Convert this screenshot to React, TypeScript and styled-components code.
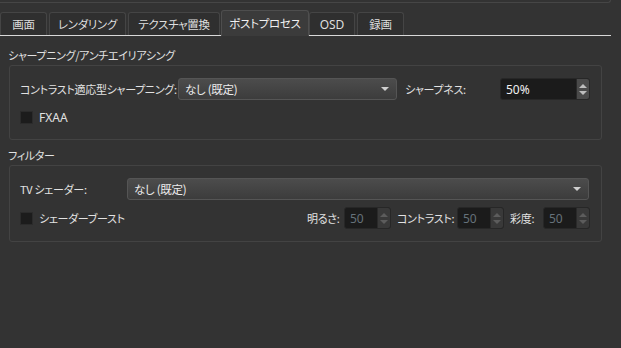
import React from "react";
import styled, { createGlobalStyle } from "styled-components";

const Global = createGlobalStyle`
  html, body { margin: 0; padding: 0; background: #333333; }
  body {
    font-family: "Noto Sans CJK JP", "Noto Sans", sans-serif;
    font-size: 11px;
    letter-spacing: -0.3px;
    color: #e2e2e2;
    font-feature-settings: "palt";
  }
`;

const Page = styled.div`
  width: 621px;
  height: 348px;
  background: #333333;
  display: flex;
  flex-direction: column;
  overflow: hidden;
`;

const TopEdge = styled.div`
  width: 610px;
  height: 2px;
  border-bottom: 1px solid #464646;
  border-right: 1px solid #464646;
  border-bottom-right-radius: 3px;
`;

const TabBar = styled.div`
  margin-top: 7px;
  width: 611px;
  height: 25px;
  display: flex;
  align-items: flex-end;
  border-bottom: 1px solid #d8d8d8;
`;

const Tab = styled.div<{ $w: number; $active?: boolean; $gap: number }>`
  width: ${(p) => p.$w}px;
  margin-right: ${(p) => p.$gap}px;
  height: ${(p) => (p.$active ? 26 : 23)}px;
  margin-bottom: ${(p) => (p.$active ? -1 : 0)}px;
  box-sizing: border-box;
  border: 1px solid ${(p) => (p.$active ? "#4e4e4e" : "#454545")};
  border-bottom: none;
  border-radius: 3px 3px 0 0;
  background: ${(p) => (p.$active ? "#3b3b3b" : "#2f2f2f")};
  color: ${(p) => (p.$active ? "#f0f0f0" : "#dedede")};
  font-size: 11.5px;
  display: flex;
  align-items: center;
  justify-content: center;
  padding-bottom: ${(p) => (p.$active ? 2 : 0)}px;
  flex-shrink: 0;
`;

const Content = styled.div`
  display: flex;
  flex-direction: column;
  gap: 5px;
  padding-top: 9px;
`;

const Group = styled.section`
  display: flex;
  flex-direction: column;
`;

const GroupTitle = styled.div`
  height: 20px;
  line-height: 20px;
  padding-left: 8px;
`;

const GroupBox = styled.div<{ $rowGap: number; $padBottom: number }>`
  margin-left: 9px;
  width: 593px;
  box-sizing: border-box;
  border: 1px solid #434343;
  border-radius: 3px;
  padding: 12px 11px ${(p) => p.$padBottom}px 10px;
  display: flex;
  flex-direction: column;
  gap: ${(p) => p.$rowGap}px;
`;

const Row = styled.div`
  height: 22px;
  display: flex;
  align-items: center;
`;

const Label = styled.span<{ $w?: number; $ml?: number }>`
  ${(p) => (p.$w ? `width: ${p.$w}px; flex-shrink: 0;` : "")}
  margin-left: ${(p) => p.$ml ?? 0}px;
  white-space: nowrap;
`;

const Combo = styled.div<{ $w?: number }>`
  ${(p) => (p.$w ? `width: ${p.$w}px;` : "flex: 1; margin-right: 1px;")}
  height: 22px;
  box-sizing: border-box;
  border: 1px solid #555555;
  border-radius: 3px;
  background: linear-gradient(#4c4c4c, #3c3c3c);
  display: flex;
  align-items: center;
  padding: 0 7px 0 6px;
  color: #ececec;
  font-size: 11.5px;
`;

const ComboText = styled.span`
  flex: 1;
`;

const Arrow = styled.span`
  width: 0;
  height: 0;
  border-left: 4px solid transparent;
  border-right: 4px solid transparent;
  border-top: 4px solid #cfcfcf;
`;

const Spin = styled.div<{ $w: number; $disabled?: boolean; $ml: number }>`
  width: ${(p) => p.$w}px;
  margin-left: ${(p) => p.$ml}px;
  height: 22px;
  box-sizing: border-box;
  border: 1px solid #272727;
  border-radius: 3px;
  background: #1b1b1b;
  display: flex;
  color: ${(p) => (p.$disabled ? "#66727a" : "#f2f2f2")};
  font-family: "Noto Sans", sans-serif;
  font-size: 12px;
  letter-spacing: 0;
  overflow: hidden;
  flex-shrink: 0;
`;

const SpinText = styled.span`
  flex: 1;
  display: flex;
  align-items: center;
  padding-left: 5px;
`;

const SpinButtons = styled.div<{ $disabled?: boolean }>`
  width: 12px;
  background: ${(p) => (p.$disabled ? "#393939" : "#4a4a4a")};
  border-left: 1px solid #2a2a2a;
  display: flex;
  flex-direction: column;
  align-items: center;
  justify-content: center;
  gap: 3px;
`;

const Up = styled.span<{ $disabled?: boolean }>`
  width: 0;
  height: 0;
  border-left: 4px solid transparent;
  border-right: 4px solid transparent;
  border-bottom: 4px solid ${(p) => (p.$disabled ? "#5c5c5c" : "#bdbdbd")};
`;

const Down = styled.span<{ $disabled?: boolean }>`
  width: 0;
  height: 0;
  border-left: 4px solid transparent;
  border-right: 4px solid transparent;
  border-top: 4px solid ${(p) => (p.$disabled ? "#5c5c5c" : "#bdbdbd")};
`;

const Check = styled.span`
  width: 13px;
  height: 13px;
  box-sizing: border-box;
  background: #1c1c1c;
  border: 1px solid #2b2b2b;
  margin-right: 6px;
  flex-shrink: 0;
`;

const LatinLabel = styled.span`
  font-family: "Noto Sans", sans-serif;
  font-size: 12px;
  letter-spacing: 0;
`;

const Spacer = styled.div`
  flex: 1;
`;

const SpinBox: React.FC<{ value: string; w: number; ml?: number; disabled?: boolean }> = ({
  value,
  w,
  ml = 0,
  disabled,
}) => (
  <Spin $w={w} $ml={ml} $disabled={disabled}>
    <SpinText>{value}</SpinText>
    <SpinButtons $disabled={disabled}>
      <Up $disabled={disabled} />
      <Down $disabled={disabled} />
    </SpinButtons>
  </Spin>
);

const tabs = [
  { label: "画面", w: 47, gap: 2 },
  { label: "レンダリング", w: 77, gap: 2 },
  { label: "テクスチャ置換", w: 92, gap: 1 },
  { label: "ポストプロセス", w: 88, gap: 0, active: true },
  { label: "OSD", w: 46, gap: 2 },
  { label: "録画", w: 47, gap: 0 },
];

export default function App() {
  return (
    <>
      <Global />
      <Page>
        <TopEdge />
        <TabBar>
          {tabs.map((t) => (
            <Tab key={t.label} $w={t.w} $gap={t.gap} $active={t.active}>
              {t.label === "OSD" ? <LatinLabel>OSD</LatinLabel> : t.label}
            </Tab>
          ))}
        </TabBar>
        <Content>
          <Group>
            <GroupTitle>シャープニング/アンチエイリアシング</GroupTitle>
            <GroupBox $rowGap={6} $padBottom={11}>
              <Row>
                <Label $w={158}>コントラスト適応型シャープニング:</Label>
                <Combo $w={220}>
                  <ComboText>なし (既定)</ComboText>
                  <Arrow />
                </Combo>
                <Label $w={95} $ml={8}>シャープネス:</Label>
                <SpinBox value="50%" w={90} />
              </Row>
              <Row>
                <Check />
                <LatinLabel>FXAA</LatinLabel>
              </Row>
            </GroupBox>
          </Group>
          <Group>
            <GroupTitle>フィルター</GroupTitle>
            <GroupBox $rowGap={7} $padBottom={12}>
              <Row>
                <Label $w={107}>TV シェーダー:</Label>
                <Combo>
                  <ComboText>なし (既定)</ComboText>
                  <Arrow />
                </Combo>
              </Row>
              <Row>
                <Check />
                <Label>シェーダーブースト</Label>
                <Spacer />
                <Label $w={37}>明るさ:</Label>
                <SpinBox value="50" w={47} disabled />
                <Label $w={60} $ml={6}>コントラスト:</Label>
                <SpinBox value="50" w={47} disabled />
                <Label $w={33} $ml={6}>彩度:</Label>
                <SpinBox value="50" w={47} disabled />
              </Row>
            </GroupBox>
          </Group>
        </Content>
      </Page>
    </>
  );
}
